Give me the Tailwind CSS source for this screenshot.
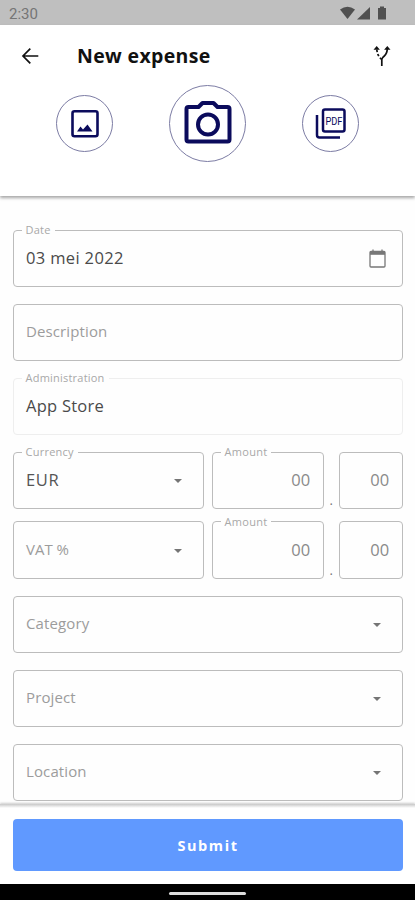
<!DOCTYPE html>
<html lang="en">
<head>
<meta charset="utf-8">
<title>New expense</title>
<script src="https://cdn.jsdelivr.net/npm/@tailwindcss/browser@4"></script>
</head>
<body class="w-[415px] h-[900px] overflow-hidden bg-white font-['Open_Sans',sans-serif]">
<div class="flex flex-col h-[900px]">
  <div class="h-[25px] shrink-0 bg-[#bfbfbf] flex items-center justify-between pl-[9px] pr-[28px]">
    <span class="font-['Roboto',sans-serif] text-[15px] leading-[25px] pt-[3px] text-[#757575]">2:30</span>
    <svg class="w-[47px] h-[15px] mt-[2px]" viewBox="0 0 47 15" fill="#505050"><path d="M0 3.500Q7.500-2 15 3.500L7.500 13z"/><path d="M30 1V13.500H17z"/><path d="M38 2h2V.5h4V2h2v11.500h-8z"/></svg>
  </div>
  <header class="h-[171px] shrink-0 bg-white relative z-10 shadow-[0_2px_3px_rgba(0,0,0,0.35)]">
    <div class="h-[60px] flex items-center pl-[21px] pr-[24px]">
      <svg class="w-[18px] h-[18px] mt-[1px]" viewBox="0 0 18 18" fill="none" stroke="#111" stroke-width="1.700"><path d="M17.300 9H2M9.300 1.700L2 9l7.300 7.300"/></svg>
      <h1 class="ml-[38px] pt-[2px] grow text-[19.500px] font-bold text-[#111] tracking-[0.350px]">New expense</h1>
      <svg class="w-[18px] h-[22px] mt-[1px]" viewBox="0 0 18 22" fill="none" stroke="#111" stroke-width="1.700"><path d="M8.800 21v-6.500q0-1.500 2.500-3.500Q14.300 8.500 14.300 3"/><path d="M8.800 14.500Q4 11 3.700 3" stroke-dasharray="2.500 2"/><path d="M.5 4.700L3.700 1l3.200 3.700zM11.100 4.700L14.300 1l3.200 3.700z" fill="#111" stroke="none"/></svg>
    </div>
    <div class="flex items-center justify-between pl-[56px] pr-[56px]">
      <div class="size-[57px] rounded-full border border-[#7c7ca4] flex items-center justify-center">
        <svg class="size-[28px]" viewBox="0 0 28 28" fill="none" stroke="#0b0b5c" stroke-width="2.600"><rect x="1.500" y="1.300" width="25" height="25" rx="2"/><path d="M6 21.500l3.500-5 2.500 3 4.500-5 5 7z" fill="#0b0b5c" stroke="none"/></svg>
      </div>
      <div class="size-[77px] rounded-full border border-[#7c7ca4] flex items-center justify-center">
        <svg class="w-[48px] h-[44px] -mt-[2px]" viewBox="0 0 48 44" fill="none" stroke="#0b0b5c" stroke-width="4" stroke-linejoin="round"><path d="M4.500 6h10l4-4h11l4 4h10q2 0 2 2v30.500q0 2-2 2h-39q-2 0-2-2V8q0-2 2-2z"/><circle cx="24" cy="23.500" r="10"/></svg>
      </div>
      <div class="size-[57px] rounded-full border border-[#7c7ca4] flex items-center justify-center">
        <svg class="w-[31px] h-[31px]" viewBox="0 0 31 31"><g fill="none" stroke="#0b0b5c" stroke-width="2.500"><rect x="8" y="1.500" width="21.500" height="22" rx="2"/><path d="M2 7v20q0 2.500 2.500 2.500H25"/></g><text x="18.900" y="16.900" text-anchor="middle" font-size="11" font-family="Roboto" textLength="17" lengthAdjust="spacingAndGlyphs" fill="#0b0b5c">PDF</text></svg>
      </div>
    </div>
  </header>
  <main class="h-[608px] shrink-0 overflow-hidden bg-[#fefefe] px-[12.500px] pt-[33.500px] flex flex-col gap-[16.650px] text-[16.500px] tracking-[0.250px] text-[#9c9c9c]">
    <div class="relative h-[57.500px] shrink-0 border border-[#bcbcbc] rounded-[4px] flex items-center justify-between px-[12.500px] text-[#4a4a4a]">
      <span class="absolute left-[8px] -top-[9px] px-[4px] bg-[#fefefe] text-[11px] leading-[15px] text-[#a8a8a8]">Date</span>
      <span class="tracking-[0.350px]">03 mei 2022</span>
      <svg class="w-[17px] h-[19px] mr-[3px] mt-[1px]" viewBox="0 0 17 19" fill="none" stroke="#777" stroke-width="1.300"><rect x="1" y="2.500" width="15" height="15.500" rx="1"/><path d="M1 4.200h15" stroke-width="3.200"/><path d="M4 .5v3M13 .5v3"/></svg>
    </div>
    <div class="h-[57.500px] shrink-0 border border-[#bcbcbc] rounded-[4px] flex items-center px-[12.500px] pb-[2px] text-[15px] tracking-[0.120px]">Description</div>
    <div class="relative h-[57.500px] shrink-0 border border-[#eee] rounded-[4px] flex items-center px-[12.500px] text-[#4a4a4a]">
      <span class="absolute left-[8px] -top-[9px] px-[4px] bg-[#fefefe] text-[11px] leading-[15px] tracking-[0.220px] text-[#a8a8a8]">Administration</span>
      App Store
    </div>
    <div class="flex shrink-0 flex-col gap-[12px]">
      <div class="flex h-[57.500px]">
        <div class="relative w-[191.500px] border border-[#bcbcbc] rounded-[4px] flex items-center justify-between pl-[12.500px] pr-[21px] text-[#555]">
          <span class="absolute left-[8px] -top-[9px] px-[4px] bg-[#fefefe] text-[11px] leading-[15px] text-[#a8a8a8]">Currency</span>
          <span class="tracking-[0.600px]">EUR</span>
          <svg class="w-[8px] h-[4px] mt-[1px]" viewBox="0 0 8 4" fill="#757575"><path d="M0 0h8L4 4z"/></svg>
        </div>
        <div class="relative ml-[7.500px] w-[112px] border border-[#bcbcbc] rounded-[4px] flex items-center justify-end pr-[12px] text-[#8a8a8a]">
          <span class="absolute left-[8px] -top-[9px] px-[4px] bg-[#fefefe] text-[11px] leading-[15px] tracking-[0.300px] text-[#a8a8a8]">Amount</span>
          00
        </div>
        <span class="w-[15.500px] text-center self-end text-[13px] leading-[18px] text-[#777]">.</span>
        <div class="grow border border-[#bcbcbc] rounded-[4px] flex items-center justify-end pr-[12px] text-[#8a8a8a]">00</div>
      </div>
      <div class="flex h-[57.500px]">
        <div class="w-[191.500px] border border-[#bcbcbc] rounded-[4px] flex items-center justify-between pl-[12.500px] pr-[21px] pb-[1px] text-[15px] tracking-[0]">
          <span>VAT %</span>
          <svg class="w-[8px] h-[4px] mt-[2px]" viewBox="0 0 8 4" fill="#757575"><path d="M0 0h8L4 4z"/></svg>
        </div>
        <div class="relative ml-[7.500px] w-[112px] border border-[#bcbcbc] rounded-[4px] flex items-center justify-end pr-[12px] text-[#8a8a8a]">
          <span class="absolute left-[8px] -top-[8px] px-[4px] bg-[#fefefe] text-[11px] leading-[15px] tracking-[0.300px] text-[#a8a8a8]">Amount</span>
          00
        </div>
        <span class="w-[15.500px] text-center self-end text-[13px] leading-[18px] text-[#777]">.</span>
        <div class="grow border border-[#bcbcbc] rounded-[4px] flex items-center justify-end pr-[12px] text-[#8a8a8a]">00</div>
      </div>
    </div>
    <div class="h-[57.500px] shrink-0 border border-[#bcbcbc] rounded-[4px] flex items-center justify-between pl-[12.500px] pr-[21px] pb-[2px] text-[15px] tracking-[0.120px]">Category <svg class="w-[8px] h-[4px] mt-[3px]" viewBox="0 0 8 4" fill="#757575"><path d="M0 0h8L4 4z"/></svg></div>
    <div class="h-[57.500px] shrink-0 border border-[#bcbcbc] rounded-[4px] flex items-center justify-between pl-[12.500px] pr-[21px] pb-[2px] text-[15px] tracking-[0.120px]">Project <svg class="w-[8px] h-[4px] mt-[3px]" viewBox="0 0 8 4" fill="#757575"><path d="M0 0h8L4 4z"/></svg></div>
    <div class="h-[57.500px] shrink-0 border border-[#bcbcbc] rounded-[4px] flex items-center justify-between pl-[12.500px] pr-[21px] pb-[2px] text-[15px] tracking-[0.120px]">Location <svg class="w-[8px] h-[4px] mt-[3px]" viewBox="0 0 8 4" fill="#757575"><path d="M0 0h8L4 4z"/></svg></div>
  </main>
  <footer class="relative z-10 h-[80px] shrink-0 pl-[13px] pr-[12px] pt-[15px] bg-linear-to-b from-[#c8c8c8] to-white to-[4px] shadow-[0_-1px_2px_rgba(0,0,0,0.2)]">
    <button class="block w-full h-[52px] rounded-[4px] bg-[#6099ff] text-white text-[14.500px] font-bold tracking-[1.600px] pt-[1px]">Submit</button>
  </footer>
  <div class="h-[16px] shrink-0 bg-black flex items-center justify-center pt-[2px]"><div class="w-[77px] h-[3px] rounded-full bg-[#ddd]"></div></div>
</div>
</body>
</html>
